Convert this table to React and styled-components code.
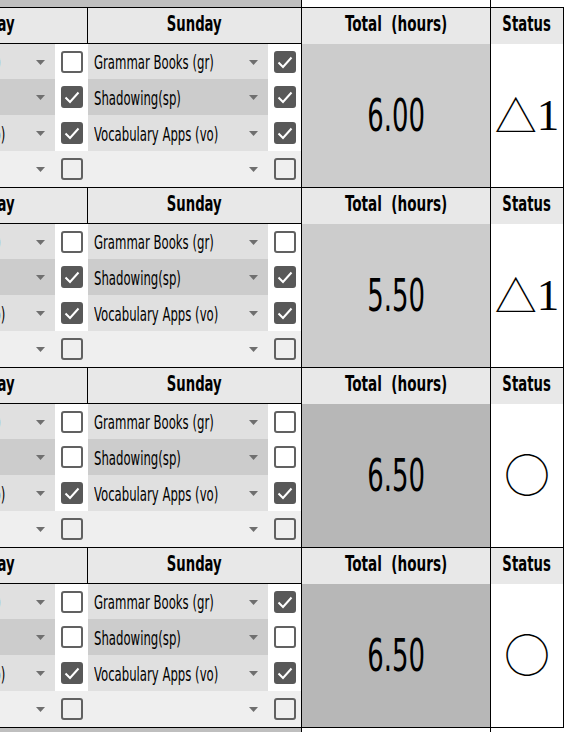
import React from 'react';
import styled, { createGlobalStyle } from 'styled-components';

const GlobalStyle = createGlobalStyle`
  html, body {
    margin: 0;
    padding: 0;
    background: #fff;
    overflow: hidden;
  }
  body {
    font-family: "DejaVu Sans Condensed", "DejaVu Sans", sans-serif;
    font-stretch: condensed;
    color: #000;
  }
`;

const Sheet = styled.div`
  margin-left: -125px;
  width: 689px;
  display: flex;
  flex-direction: column;
`;

const Strip = styled.div`
  display: flex;
  height: ${p => p.$h}px;
`;

const StripDays = styled.div`
  width: 426px;
  background: #bfbfbf;
  border-right: 1px solid #000;
`;

const StripTotal = styled.div`
  width: 188px;
  border-right: 1px solid #000;
`;

const Block = styled.div`
  display: flex;
  border-top: 1px solid #000;
  ${p => p.$last && 'border-bottom: 1px solid #000;'}
`;

const Days = styled.div`
  width: 426px;
  display: flex;
  flex-direction: column;
  border-right: 1px solid #000;
`;

const DayHeads = styled.div`
  display: flex;
  height: 35px;
  border-bottom: 1px solid #000;
`;

const DayHead = styled.div`
  box-sizing: border-box;
  width: 213px;
  background: #e8e8e8;
  display: flex;
  align-items: center;
  justify-content: center;
  font-weight: bold;
  font-size: 21px;
  padding-bottom: 3px;
  ${p => p.$divider && 'border-right: 1px solid #000;'}
`;

const Row = styled.div`
  display: flex;
  height: ${p => p.$h}px;
`;

const Pick = styled.div`
  box-sizing: border-box;
  width: 180px;
  background: ${p => p.$bg};
  display: flex;
  align-items: center;
  padding: 1px 10px 0 6px;
  font-size: 20px;
`;

const Label = styled.div`
  flex: 1 1 0;
  min-width: 0;
  display: flex;
`;

const CheckCell = styled.div`
  width: 33px;
  background: ${p => p.$bg};
  display: flex;
  align-items: center;
  justify-content: center;
`;

const Box = styled.span`
  box-sizing: border-box;
  width: 22px;
  height: 22px;
  border-radius: 3px;
  border: 2px solid ${p => (p.$on ? '#585858' : '#616161')};
  background: ${p => (p.$on ? '#585858' : 'transparent')};
  display: flex;
  align-items: center;
  justify-content: center;
`;

const Squeeze = styled.span`
  display: inline-block;
  white-space: pre;
  transform: scaleX(${p => p.$x});
  transform-origin: ${p => p.$origin || 'center'};
`;

const Total = styled.div`
  width: 188px;
  display: flex;
  flex-direction: column;
  border-right: 1px solid #000;
`;

const Status = styled.div`
  width: 72px;
  display: flex;
  flex-direction: column;
  border-right: 1px solid #000;
`;

const ColHead = styled.div`
  height: 36px;
  background: #e8e8e8;
  display: flex;
  align-items: center;
  justify-content: center;
  font-weight: bold;
  font-size: 21px;
  padding-bottom: 4px;
  box-sizing: border-box;
`;

const ColBody = styled.div`
  flex: 1;
  background: ${p => p.$bg || '#fff'};
  display: flex;
  align-items: center;
  justify-content: center;
  line-height: 1;
`;

const BigNumber = styled.span`
  font-size: 45px;
  display: inline-block;
  transform: scaleX(0.64);
`;

const Mark = styled.span`
  display: inline-block;
  font-family: "Noto Sans CJK JP", sans-serif;
  font-weight: 300;
  font-size: ${p => p.$size}px;
  line-height: 1;
  margin-bottom: ${p => p.$lift}px;
`;

const Digit = styled.span`
  font-family: "Liberation Serif", serif;
  font-size: 45px;
  line-height: 1;
`;

const Arrow = () => (
  <svg width="9" height="5" viewBox="0 0 9 5" style={{ flexShrink: 0 }}>
    <path d="M0 0h9L4.5 5z" fill="#6f6f6f" />
  </svg>
);

const Check = ({ on }) => (
  <Box $on={on}>
    {on && (
      <svg width="18" height="18" viewBox="0 0 18 18">
        <polyline points="2.5,9.5 7,14 15.5,4.5" fill="none" stroke="#fff" strokeWidth="2" />
      </svg>
    )}
  </Box>
);

const items = [
  { label: 'Grammar Books (gr)', bg: '#e0e0e0', h: 35 },
  { label: 'Shadowing(sp)', bg: '#cccccc', h: 36 },
  { label: 'Vocabulary Apps (vo)', bg: '#e0e0e0', h: 36 },
  { label: '', bg: '#efefef', h: 36 },
];

const weeks = [
  { sat: [false, true, true, false], sun: [true, true, true, false], total: '6.00', status: 'tri', bg: '#cccccc' },
  { sat: [false, true, true, false], sun: [false, true, true, false], total: '5.50', status: 'tri', bg: '#cccccc' },
  { sat: [false, false, true, false], sun: [false, false, true, false], total: '6.50', status: 'ok', bg: '#b7b7b7' },
  { sat: [false, false, true, false], sun: [true, false, true, false], total: '6.50', status: 'ok', bg: '#b7b7b7' },
];

function Week({ week, last }) {
  return (
    <Block $last={last}>
      <Days>
        <DayHeads>
          <DayHead $divider><Squeeze $x={0.7}>Saturday</Squeeze></DayHead>
          <DayHead><Squeeze $x={0.7}>Sunday</Squeeze></DayHead>
        </DayHeads>
        {items.map((item, i) => (
          <Row key={i} $h={item.h}>
            {[week.sat[i], week.sun[i]].map((on, d) => (
              <React.Fragment key={d}>
                <Pick $bg={item.bg}>
                  <Label>
                    <Squeeze $x={0.65} $origin="left">{item.label}</Squeeze>
                  </Label>
                  <Arrow />
                </Pick>
                <CheckCell $bg={item.label ? '#fff' : item.bg}>
                  <Check on={on} />
                </CheckCell>
              </React.Fragment>
            ))}
          </Row>
        ))}
      </Days>
      <Total>
        <ColHead><Squeeze $x={0.72}>Total  (hours)</Squeeze></ColHead>
        <ColBody $bg={week.bg}><BigNumber>{week.total}</BigNumber></ColBody>
      </Total>
      <Status>
        <ColHead><Squeeze $x={0.7}>Status</Squeeze></ColHead>
        <ColBody>
          {week.status === 'tri' ? (
            <>
              <Mark $size={42} $lift={4}>△</Mark>
              <Digit>1</Digit>
            </>
          ) : (
            <Mark $size={46} $lift={8}>○</Mark>
          )}
        </ColBody>
      </Status>
    </Block>
  );
}

export default function App() {
  return (
    <>
      <GlobalStyle />
      <Sheet>
        <Strip $h={7}>
          <StripDays />
          <StripTotal />
        </Strip>
        {weeks.map((week, i) => (
          <Week key={i} week={week} last={i === weeks.length - 1} />
        ))}
        <Strip $h={5}>
          <StripDays />
          <StripTotal />
        </Strip>
      </Sheet>
    </>
  );
}
